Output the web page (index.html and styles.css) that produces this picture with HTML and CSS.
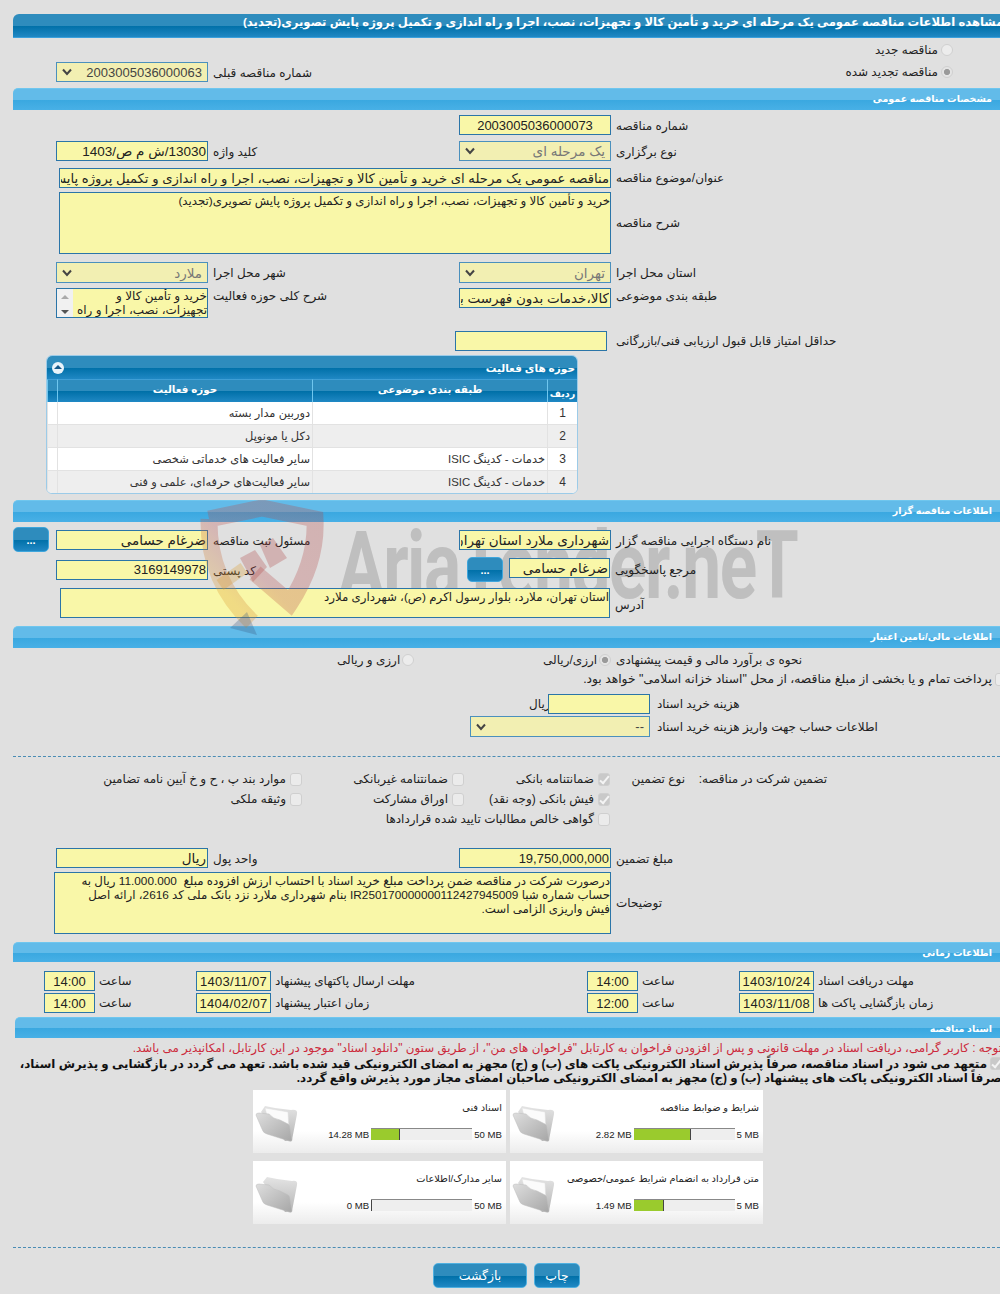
FILE: index.html
```html
<!DOCTYPE html>
<html lang="fa">
<head>
  <meta charset="UTF-8">
  <title>مشاهده اطلاعات مناقصه</title>
  <link rel="stylesheet" href="styles.css">
</head>
<body>
<svg class="defs" width="0" height="0">
  <defs>
    <linearGradient id="folderBack" x1="0" y1="0" x2="0" y2="1"><stop offset="0" stop-color="#e4e4e4"/><stop offset="1" stop-color="#b4b4b4"/></linearGradient>
    <linearGradient id="folderFront" x1="0" y1="0" x2="1" y2="1"><stop offset="0" stop-color="#dedede"/><stop offset="1" stop-color="#a6a6a6"/></linearGradient>
    <linearGradient id="shieldStroke" x1="1" y1="0" x2="0" y2="1"><stop offset="0" stop-color="#b04848"/><stop offset=".55" stop-color="#b85050"/><stop offset=".8" stop-color="#dc9a30"/><stop offset="1" stop-color="#dc9a30"/></linearGradient>
    <symbol id="folderFull" viewBox="0 0 44 40">
      <path d="M6 9 L10 3 L20 5 L36 7 Q43 6 42 11 L37 37 L30 38 Z" fill="url(#folderBack)"/>
      <path d="M10 5 L33 9 L34 30 L14 20 Z" fill="#fbfbfb" stroke="#dedede" stroke-width=".5"/>
      <path d="M1 12 Q1 10 4 10 L14 11 Q18 16 25 17 L33 21 Q35 22 35 26 L37 37 Q37 39 34 38 L12 31 Q8 30 7 26 Z" fill="url(#folderFront)" stroke="#bcbcbc" stroke-width=".5"/>
    </symbol>
    <symbol id="folderEmpty" viewBox="0 0 44 40">
      <path d="M8 8 L12 3 L22 5 L37 7 Q43 6 42 11 L37 37 L30 38 Z" fill="url(#folderBack)"/>
      <path d="M1 12 Q1 10 4 10 L14 11 Q18 16 25 17 L33 21 Q35 22 35 26 L37 37 Q37 39 34 38 L12 31 Q8 30 7 26 Z" fill="url(#folderFront)" stroke="#bcbcbc" stroke-width=".5"/>
    </symbol>
    <symbol id="chev" viewBox="0 0 10 8">
      <path d="M1 1.5 L5 6 L9 1.5" fill="none" stroke="#444" stroke-width="2"/>
    </symbol>
  </defs>
</svg>

<div class="page">
  <!-- watermark text sits behind the form -->
  <span class="wm-text">AriaTender.neT</span>

  <div class="title-bar"><span dir="rtl">مشاهده اطلاعات مناقصه عمومی یک مرحله ای خرید و تأمین کالا و تجهیزات، نصب، اجرا و راه اندازی و تکمیل پروژه پایش تصویری(تجدید)</span></div>

  <div class="radio-line first">
    <span class="radio"></span><span class="lbl">مناقصه جدید</span>
  </div>
  <div class="row prev-row">
    <div class="f-left">
      <div class="select w152"><svg class="chev"><use href="#chev"/></svg><span class="val dark">2003005036000063</span></div>
      <span class="lbl">شماره مناقصه قبلی</span>
    </div>
    <div class="radio-inline"><span class="radio on"></span><span class="lbl">مناقصه تجدید شده</span></div>
  </div>

  <div class="section mt6">مشخصات مناقصه عمومی</div>

  <div class="row mt5">
    <div class="f-left"></div>
    <div class="f-right"><input class="inp w152 center" value="2003005036000073" readonly><span class="lbl">شماره مناقصه</span></div>
  </div>
  <div class="row mt6">
    <div class="f-left"><input class="inp w152 fa" value="13030/ش م ص/1403" readonly><span class="lbl">کلید واژه</span></div>
    <div class="f-right"><div class="select w152 fa"><svg class="chev"><use href="#chev"/></svg><span class="val">یک مرحله ای</span></div><span class="lbl">نوع برگزاری</span></div>
  </div>
  <div class="row mt7 pad59">
    <input class="inp wide" value="مناقصه عمومی یک مرحله ای خرید و تأمین کالا و تجهیزات، نصب، اجرا و راه اندازی و تکمیل پروژه پایش تصویری(تجدید)" readonly>
    <span class="lbl">عنوان/موضوع مناقصه</span>
  </div>
  <div class="row mt4 pad59 mid">
    <textarea class="inp wide area-62" readonly>خرید و تأمین کالا و تجهیزات، نصب، اجرا و راه اندازی و تکمیل پروژه پایش تصویری(تجدید)</textarea>
    <span class="lbl">شرح مناقصه</span>
  </div>
  <div class="row mt8">
    <div class="f-left"><div class="select w152 h21 fa"><svg class="chev"><use href="#chev"/></svg><span class="val">ملارد</span></div><span class="lbl">شهر محل اجرا</span></div>
    <div class="f-right"><div class="select w152 h21 fa"><svg class="chev"><use href="#chev"/></svg><span class="val">تهران</span></div><span class="lbl">استان محل اجرا</span></div>
  </div>
  <div class="row mt5 top">
    <div class="f-left">
      <div class="scrollbox">
        <div class="scroller"><span class="arrow up"></span><span class="arrow down"></span></div>
        <div class="scrolltext">خرید و تأمین کالا و تجهیزات، نصب، اجرا و راه اندازی</div>
      </div>
      <span class="lbl">شرح کلی حوزه فعالیت</span>
    </div>
    <div class="f-right"><input class="inp w152 fa" value="کالا،خدمات بدون فهرست بها" readonly><span class="lbl">طبقه بندی موضوعی</span></div>
  </div>
  <div class="row mt13">
    <div class="f-left"></div>
    <div class="f-right shift"><input class="inp w152" readonly><span class="lbl">حداقل امتیاز قابل قبول ارزیابی فنی/بازرگانی</span></div>
  </div>

  <div class="grid-box">
    <div class="grid-title"><span class="collapse"></span><span>حوزه های فعالیت</span></div>
    <table class="grid">
      <thead>
        <tr><th class="c-no">ردیف</th><th class="c-cat">طبقه بندی موضوعی</th><th class="c-act">حوزه فعالیت</th><th class="c-pad"></th></tr>
      </thead>
      <tbody>
        <tr><td class="num">1</td><td></td><td>دوربین مدار بسته</td><td></td></tr>
        <tr class="alt"><td class="num">2</td><td></td><td>دکل یا مونوپل</td><td></td></tr>
        <tr><td class="num">3</td><td>خدمات - کدینگ ISIC</td><td>سایر فعالیت های خدماتی شخصی</td><td></td></tr>
        <tr class="alt"><td class="num">4</td><td>خدمات - کدینگ ISIC</td><td>سایر فعالیت‌های حرفه‌ای، علمی و فنی</td><td></td></tr>
      </tbody>
    </table>
  </div>

  <div class="section mt6">اطلاعات مناقصه گزار</div>

  <div class="row mt8">
    <div class="f-left btn-left">
      <button class="dots">...</button>
      <input class="inp w152 fa" value="ضرغام حسامی" readonly><span class="lbl">مسئول ثبت مناقصه</span>
    </div>
    <div class="f-right"><input class="inp w152 fa" value="شهرداری ملارد استان تهران" readonly><span class="lbl">نام دستگاه اجرایی مناقصه گزار</span></div>
  </div>
  <div class="row mt7">
    <div class="f-left"><input class="inp w152" value="3169149978" readonly><span class="lbl">کد پستی</span></div>
    <div class="f-right btn-right">
      <button class="dots">...</button>
      <input class="inp w101 fa" value="ضرغام حسامی" readonly><span class="lbl">مرجع پاسخگویی</span>
    </div>
  </div>
  <div class="row mt6 pad60 bottom">
    <textarea class="inp addr" readonly>استان تهران، ملارد، بلوار رسول اکرم (ص)، شهرداری ملارد</textarea>
    <span class="lbl">آدرس</span>
  </div>

  <div class="section mt8">اطلاعات مالی/تامین اعتبار</div>

  <div class="row mt2 est-row">
    <div class="est-other"><span class="radio"></span><span class="lbl">ارزی و ریالی</span></div>
    <div class="est-main"><span class="radio on"></span><span class="lbl">ارزی/ریالی</span></div>
    <span class="lbl">نحوه ی برآورد مالی و قیمت پیشنهادی</span>
  </div>
  <div class="pay-line"><span class="check"></span><span class="lbl">پرداخت تمام و یا بخشی از مبلغ مناقصه، از محل "اسناد خزانه اسلامی" خواهد بود.</span></div>
  <div class="row mt7 fee-row">
    <span class="lbl unit">ریال</span><input class="inp w102" readonly><span class="lbl">هزینه خرید اسناد</span>
  </div>
  <div class="row mt2 acc-row">
    <div class="select w180 h21"><svg class="chev"><use href="#chev"/></svg><span class="val dark">--</span></div><span class="lbl">اطلاعات حساب جهت واریز هزینه خرید اسناد</span>
  </div>

  <hr class="dash">

  <div class="guarantee">
    <span></span>
    <span class="lbl">تضمین شرکت در مناقصه:</span>
    <span class="lbl">نوع تضمین</span>
    <div class="opt"><span class="check on"></span><span class="lbl">ضمانتنامه بانکی</span></div>
    <div class="opt"><span class="check"></span><span class="lbl">ضمانتنامه غیربانکی</span></div>
    <div class="opt"><span class="check"></span><span class="lbl">موارد بند پ ، ح و خ آیین نامه تضامین</span></div>
    <div class="opt s3"><span class="check on"></span><span class="lbl">فیش بانکی (وجه نقد)</span></div>
    <div class="opt"><span class="check"></span><span class="lbl">اوراق مشارکت</span></div>
    <div class="opt"><span class="check"></span><span class="lbl">وثیقه ملکی</span></div>
    <div class="opt s3 span3"><span class="check"></span><span class="lbl">گواهی خالص مطالبات تایید شده قراردادها</span></div>
  </div>

  <div class="row amount-row">
    <div class="f-left"><input class="inp w152 fa" value="ریال" readonly><span class="lbl">واحد پول</span></div>
    <div class="f-right"><input class="inp w152" value="19,750,000,000" readonly><span class="lbl">مبلغ تضمین</span></div>
  </div>
  <div class="row mt4 pad54 mid">
    <textarea class="inp notes-area" readonly>درصورت شرکت در مناقصه ضمن پرداخت مبلغ خرید اسناد با احتساب ارزش افزوده مبلغ  11.000.000 ریال به حساب شماره شبا IR250170000000112427945009 بنام شهرداری ملارد نزد بانک ملی کد 2616، ارائه اصل فیش واریزی الزامی است.</textarea>
    <span class="lbl">توضیحات</span>
  </div>

  <div class="section mt8 thin">اطلاعات زمانی</div>

  <div class="times mt9">
    <div class="t-cell"><input class="inp t-time" value="14:00" readonly><span class="lbl">ساعت</span></div>
    <div class="t-cell"><input class="inp t-date" value="1403/11/07" readonly><span class="lbl">مهلت ارسال پاکتهای پیشنهاد</span></div>
    <div class="t-cell"><input class="inp t-time" value="14:00" readonly><span class="lbl">ساعت</span></div>
    <div class="t-cell"><input class="inp t-date" value="1403/10/24" readonly><span class="lbl">مهلت دریافت اسناد</span></div>
    <div class="t-cell"><input class="inp t-time" value="14:00" readonly><span class="lbl">ساعت</span></div>
    <div class="t-cell"><input class="inp t-date" value="1404/02/07" readonly><span class="lbl">زمان اعتبار پیشنهاد</span></div>
    <div class="t-cell"><input class="inp t-time" value="12:00" readonly><span class="lbl">ساعت</span></div>
    <div class="t-cell"><input class="inp t-date" value="1403/11/08" readonly><span class="lbl">زمان بازگشایی پاکت ها</span></div>
  </div>

  <div class="section docs-bar">اسناد مناقصه</div>

  <p class="warn">توجه : کاربر گرامی، دریافت اسناد در مهلت قانونی و پس از افزودن فراخوان به کارتابل "فراخوان های من"، از طریق ستون "دانلود اسناد" موجود در این کارتابل، امکانپذیر می باشد.</p>
  <p class="pledge"><span class="check on"></span>متعهد می شود در اسناد مناقصه، صرفاً پذیرش اسناد الکترونیکی پاکت های (ب) و (ج) مجهز به امضای الکترونیکی قید شده باشد. تعهد می گردد در بازگشایی و پذیرش اسناد، صرفاً اسناد الکترونیکی پاکت های پیشنهاد (ب) و (ج) مجهز به امضای الکترونیکی صاحبان امضای مجاز مورد پذیرش واقع گردد.</p>

  <div class="cards">
    <div class="card">
      <svg class="folder"><use href="#folderFull"/></svg>
      <div class="card-body">
        <div class="card-title">اسناد فنی</div>
        <div class="meter"><span>14.28 MB</span><div class="bar"><div class="fill" style="width:28.6%"></div></div><span>50 MB</span></div>
      </div>
    </div>
    <div class="card">
      <svg class="folder"><use href="#folderFull"/></svg>
      <div class="card-body">
        <div class="card-title">شرایط و ضوابط مناقصه</div>
        <div class="meter"><span>2.82 MB</span><div class="bar"><div class="fill" style="width:56.4%"></div></div><span>5 MB</span></div>
      </div>
    </div>
    <div class="card">
      <svg class="folder"><use href="#folderEmpty"/></svg>
      <div class="card-body">
        <div class="card-title">سایر مدارک/اطلاعات</div>
        <div class="meter"><span>0 MB</span><div class="bar"><div class="fill" style="width:0"></div></div><span>50 MB</span></div>
      </div>
    </div>
    <div class="card">
      <svg class="folder"><use href="#folderFull"/></svg>
      <div class="card-body">
        <div class="card-title">متن قرارداد به انضمام شرایط عمومی/خصوصی</div>
        <div class="meter"><span>1.49 MB</span><div class="bar"><div class="fill" style="width:29.8%"></div></div><span>5 MB</span></div>
      </div>
    </div>
  </div>

  <hr class="dash end">

  <div class="actions">
    <button class="action back">بازگشت</button>
    <button class="action print">چاپ</button>
  </div>

  <!-- shield part of the watermark tints what lies under it -->
  <svg class="shield" viewBox="0 0 125 137">
    <path d="M9 19 L62 8 L115 19 Q117 62 90 103 L55 73 M9 19 Q8 80 52 122" fill="none" stroke="url(#shieldStroke)" stroke-width="17" opacity=".3"/>
    <path d="M40 58 L55 50 L67 67 L53 82 Z M60 45 L73 38 L87 58 L70 68 Z" fill="#b04848" opacity=".3"/>
    <path d="M20 85 L44 68" fill="none" stroke="#dc9a30" stroke-width="12" opacity=".3"/>
    <path d="M47 112 L57 135 L30 128 Z" fill="#3a5a80" opacity=".3"/>
  </svg>
</div>
</body>
</html>
```

FILE: styles.css
```css
/* Global Styles */
html, body {
  margin: 0;
  padding: 0;
}
body {
  background-color: #e0e0e0;
  color: #222;
  font-family: "Liberation Sans", "DejaVu Sans", sans-serif;
  font-size: 12px;
}
.defs {
  position: absolute;
}
.page {
  position: relative;
  z-index: 0;
  width: 1000px;
  height: 1294px;
  overflow: hidden;
}
.lbl {
  white-space: nowrap;
  font-size: 12px;
  line-height: 16px;
}

/* Bars */
.title-bar {
  margin: 14px 0 0 13px;
  height: 23px;
  padding-left: 230px;
  line-height: 15px;
  color: #fff;
  font-size: 11.6px;
  font-weight: bold;
  white-space: nowrap;
  overflow: hidden;
  border-radius: 6px 0 0 0;
  border-bottom: 1px solid #3aa0dc;
  background: linear-gradient(#2e8cbd 0, #2e8cbd 50%, #0070a8 52%, #2088c4 100%);
}
.title-bar span {
  display: inline-block;
}
.section {
  box-sizing: border-box;
  margin-left: 13px;
  height: 22px;
  line-height: 20px;
  padding-right: 8px;
  direction: rtl;
  color: #fff;
  font-size: 9.5px;
  font-weight: bold;
  border-radius: 5px 0 0 0;
  border-top: 1px solid #6fc6ee;
  background: linear-gradient(#62bbe9 0, #62bbe9 50%, #3aa8e0 52%, #48b0e6 100%);
}
.section.thin {
  height: 20px;
  line-height: 19px;
}
.docs-bar {
  margin: 4px 0 0 15px;
  height: 21px;
  line-height: 21px;
}

/* Spacing */
.mt2 { margin-top: 2px; }
.mt4 { margin-top: 4px; }
.mt5 { margin-top: 5px; }
.mt6 { margin-top: 6px; }
.mt7 { margin-top: 7px; }
.mt8 { margin-top: 8px; }
.mt9 { margin-top: 9px; }
.mt13 { margin-top: 13px; }

/* Form rows */
.row {
  display: flex;
  align-items: center;
}
.row.top {
  align-items: flex-start;
}
.row.bottom {
  align-items: flex-end;
}
.row.bottom .lbl {
  margin-bottom: 5px;
}
.row .lbl {
  margin-left: 5px;
}
.f-left {
  display: flex;
  align-items: flex-start;
  width: 459px;
  padding-left: 56px;
  box-sizing: border-box;
}
.f-right {
  display: flex;
  align-items: flex-start;
  flex: 1;
}
.f-left .lbl, .f-right .lbl {
  margin-top: 3px;
}
.row.top .f-left .lbl, .row.top .f-right .lbl {
  margin-top: 0;
}
.pad59 { padding-left: 59px; }
.pad60 { padding-left: 60px; }
.pad54 { padding-left: 54px; }
.shift {
  margin-left: -4px;
}
.row .shift .lbl {
  margin: 2px 0 0 9px;
}

/* Controls */
.inp {
  box-sizing: border-box;
  height: 20px;
  margin: 0;
  padding: 0 1px;
  direction: rtl;
  border: 1px solid #2b75a8;
  background-color: #f9f7a8;
  color: #222;
  font-family: "Liberation Sans", "DejaVu Sans", sans-serif;
  font-size: 13px;
  outline: none;
}
textarea.inp {
  resize: none;
  overflow: hidden;
  font-size: 11.8px;
  line-height: 14px;
  padding: 1px 0 1px 1px;
}
.center {
  text-align: center;
}
.inp.fa, .select.fa {
  font-size: 13.5px;
}
.w152 { width: 152px; }
.w101 { width: 101px; }
.w102 { width: 102px; }
.w180 { width: 180px; }
.wide { width: 552px; font-size: 13.2px; }
.area-62 { height: 62px; }
.addr { width: 550px; height: 30px; }
.notes-area { width: 557px; height: 62px; }
textarea.notes-area {
  padding-left: 12px;
}
.select {
  box-sizing: border-box;
  display: flex;
  align-items: center;
  justify-content: space-between;
  height: 20px;
  padding: 0 5px;
  border: 1px solid #4b90bd;
  background-color: #f2efb2;
  color: #777;
  font-size: 13px;
}
.select.h21 {
  height: 21px;
}
.val {
  white-space: nowrap;
  direction: rtl;
}
.val.dark {
  color: #444;
}
.chev {
  width: 10px;
  height: 8px;
}
.radio {
  display: inline-block;
  width: 12px;
  height: 12px;
  border-radius: 50%;
  border: 1px solid #d0d0d0;
  background: #ececec;
  box-sizing: border-box;
}
.radio.on {
  background: radial-gradient(#9a9a9a 0, #9a9a9a 40%, #e4e4e4 45%);
}
.check {
  display: inline-block;
  box-sizing: border-box;
  width: 12px;
  height: 13px;
  border-radius: 3px;
  border: 1px solid #cfcfcf;
  background: #ebebeb;
  position: relative;
}
.check.on {
  background: #c9c9c9;
}
.check.on::after {
  content: "";
  position: absolute;
  left: 3px;
  top: 0;
  width: 3px;
  height: 8px;
  border: solid #f4f4f4;
  border-width: 0 2px 2px 0;
  transform: rotate(40deg);
}
.radio-line {
  display: flex;
  direction: rtl;
  align-items: center;
  gap: 3px;
  padding-right: 47px;
  margin-top: 4px;
  height: 16px;
}
.radio-inline {
  display: flex;
  direction: rtl;
  align-items: center;
  gap: 3px;
  flex: 1;
  padding-right: 47px;
}
.radio-inline .lbl {
  margin-left: 0;
}
.prev-row {
  margin-top: 4px;
  height: 20px;
}
.dots {
  flex: none;
  width: 36px;
  height: 25px;
  padding: 0;
  border: 1px solid #3fa6dc;
  border-radius: 5px;
  color: #fff;
  font-size: 11px;
  font-weight: bold;
  background: linear-gradient(#2e8cbd 0, #2e8cbd 50%, #0070a8 52%, #2088c4 100%);
}
.btn-left {
  padding-left: 13px;
}
.btn-left .dots {
  margin: -3px 7px -2px 0;
}
.btn-right {
  padding-left: 8px;
}
.btn-right .dots {
  margin-right: 6px;
}
.btn-right .inp {
  margin-top: 1px;
}
.f-right.btn-right .lbl {
  margin-top: 5px;
}
.scrollbox {
  box-sizing: border-box;
  display: flex;
  width: 152px;
  height: 30px;
  border: 1px solid #2b75a8;
  background: #f9f7a8;
  overflow: hidden;
}
.scroller {
  flex: none;
  width: 16px;
  background: #f1f1f1;
  display: flex;
  flex-direction: column;
  justify-content: space-between;
  align-items: center;
  padding: 6px 0 3px;
  box-sizing: border-box;
}
.arrow {
  width: 0;
  height: 0;
  border-left: 4px solid transparent;
  border-right: 4px solid transparent;
}
.arrow.up {
  border-bottom: 4px solid #aaa;
}
.arrow.down {
  border-top: 4px solid #555;
}
.scrolltext {
  direction: rtl;
  font-size: 12px;
  line-height: 14px;
  color: #222;
  flex: 1;
}

/* Activities grid */
.grid-box {
  margin: 4px 0 0 46px;
  width: 532px;
  height: 139px;
  box-sizing: border-box;
  border: 1px solid #9ccbe8;
  border-radius: 6px;
  overflow: hidden;
  background: #fff;
}
.grid-title {
  display: flex;
  justify-content: space-between;
  align-items: center;
  height: 23px;
  padding: 0 2px 0 5px;
  color: #fff;
  font-size: 10.5px;
  font-weight: bold;
  background: linear-gradient(#2e8cbd 0, #2e8cbd 50%, #0070a8 52%, #2088c4 100%);
}
.collapse {
  width: 12px;
  height: 12px;
  border-radius: 50%;
  background: #e8f3fa;
  position: relative;
}
.collapse::after {
  content: "";
  position: absolute;
  left: 2px;
  top: 3px;
  border-left: 4px solid transparent;
  border-right: 4px solid transparent;
  border-bottom: 4px solid #15598a;
}
.grid {
  width: 530px;
  direction: rtl;
  table-layout: fixed;
  border-collapse: separate;
  border-spacing: 0;
}
.grid th {
  box-sizing: border-box;
  height: 23px;
  padding: 0 0 4px;
  color: #fff;
  font-size: 10.4px;
  font-weight: bold;
  border-left: 1px solid #6fc6ee;
  border-top: 1px solid #3f9fd6;
  background: linear-gradient(#2e8cbd 0, #2e8cbd 50%, #0070a8 52%, #2088c4 100%);
}
.grid th.c-no {
  padding: 4px 0 0;
  font-size: 9.6px;
}
.c-no { width: 30px; }
.c-cat { width: 235px; }
.c-act { width: 255px; }
.c-pad { width: 10px; }
.grid td {
  box-sizing: border-box;
  height: 23px;
  padding: 0 2px;
  font-size: 11.4px;
  color: #333;
  border-left: 1px solid #e2e2e2;
  border-bottom: 1px solid #e2e2e2;
  white-space: nowrap;
}
.grid .alt td {
  background: #eee;
}
.grid .num {
  text-align: center;
  font-size: 12px;
}

/* Financial */
.est-row {
  height: 20px;
  padding-left: 337px;
}
.est-row .lbl {
  margin-left: 0;
}
.est-other, .est-main {
  display: flex;
  align-items: center;
  gap: 2px;
  flex-direction: row-reverse;
}
.est-other {
  width: 206px;
  justify-content: flex-end;
}
.est-main {
  width: 73px;
  justify-content: flex-end;
}
.pay-line {
  display: flex;
  direction: rtl;
  align-items: center;
  gap: 3px;
  margin: 1px -7px 0 0;
  height: 16px;
}
.pay-line .lbl {
  font-size: 12.3px;
}
.fee-row {
  padding-left: 529px;
  height: 20px;
}
.row .unit {
  margin: 0;
  width: 19px;
}
.fee-row .lbl:last-child, .acc-row .lbl {
  margin-left: 7px;
}
.acc-row {
  padding-left: 470px;
}
.dash {
  margin: 19px 0 0 13px;
  height: 0;
  border: 0;
  border-top: 1px dashed #4a8cb4;
}
.dash.end {
  margin-top: 23px;
}

/* Guarantee */
.guarantee {
  display: grid;
  direction: rtl;
  grid-template-columns: 173px 142px 75px 146px 162px 1fr;
  grid-auto-rows: 20px;
  margin-top: 12px;
  align-items: center;
}
.opt {
  display: flex;
  align-items: center;
  gap: 4px;
}
.s3 {
  grid-column-start: 3;
  grid-column-end: 5;
  padding-right: 75px;
}
.span3 {
  grid-column-end: 7;
}
.amount-row {
  margin-top: 19px;
}

/* Times */
.times {
  display: grid;
  grid-template-columns: 152px 391px 152px 1fr;
  row-gap: 2px;
  padding-left: 44px;
}
.t-cell {
  display: flex;
  align-items: center;
}
.t-cell .lbl {
  margin-left: 4px;
}
.t-time {
  width: 51px;
  text-align: center;
}
.t-date {
  width: 75px;
  text-align: center;
  letter-spacing: .3px;
}

/* Documents */
.warn {
  margin: 3px -2px 0 0;
  direction: rtl;
  color: #cc2a3c;
  font-size: 11.9px;
  line-height: 14px;
  white-space: nowrap;
}
.pledge {
  margin: 2px -2px 0 0;
  direction: rtl;
  color: #111;
  font-size: 11.85px;
  font-weight: bold;
  line-height: 14px;
}
.pledge .check {
  margin-left: 3px;
  vertical-align: -2px;
}
.cards {
  display: grid;
  grid-template-columns: 253px 253px;
  column-gap: 4px;
  row-gap: 8px;
  margin: 5px 0 0 253px;
}
.card {
  display: flex;
  height: 63px;
  background: linear-gradient(#fff 65%, #ececec 100%);
}
.folder {
  flex: none;
  width: 44px;
  height: 40px;
  margin: 13px 0 0 2px;
}
.card-body {
  flex: 1;
  padding: 0 4px 0 0;
  min-width: 0;
}
.card-title {
  direction: rtl;
  margin-top: 11px;
  font-size: 9.8px;
  line-height: 14px;
  white-space: nowrap;
}
.meter {
  display: flex;
  justify-content: flex-end;
  align-items: center;
  gap: 2px;
  margin-top: 13px;
  font-size: 9.6px;
}
.bar {
  box-sizing: border-box;
  width: 101px;
  height: 12px;
  border-top: 1px solid #888;
  background: #eee;
}
.fill {
  box-sizing: border-box;
  height: 11px;
  min-width: 1px;
  background: #9acb2d;
  border-right: 1px solid #444;
}

/* Buttons */
.actions {
  display: flex;
  justify-content: flex-start;
  gap: 7px;
  margin: 15px 0 0 433px;
}
.action {
  height: 25px;
  padding: 0;
  border: 1px solid #4fb0e0;
  border-radius: 5px;
  color: #fff;
  font-family: "Liberation Sans", "DejaVu Sans", sans-serif;
  font-size: 12.5px;
  background: linear-gradient(#2e8cbd 0, #2e8cbd 50%, #0070a8 52%, #2088c4 100%);
}
.back { width: 94px; }
.print { width: 46px; }

/* Watermark */
.shield {
  position: absolute;
  left: 200px;
  top: 500px;
  width: 125px;
  height: 137px;
  pointer-events: none;
}
.wm-text {
  position: absolute;
  z-index: -1;
  left: 338px;
  top: 516px;
  color: #bfbfbf;
  font-family: Roboto, "Liberation Sans", sans-serif;
  font-size: 95px;
  font-weight: bold;
  line-height: 100px;
  white-space: nowrap;
  letter-spacing: -2px;
  transform: scaleX(.73);
  transform-origin: left center;
}
```
